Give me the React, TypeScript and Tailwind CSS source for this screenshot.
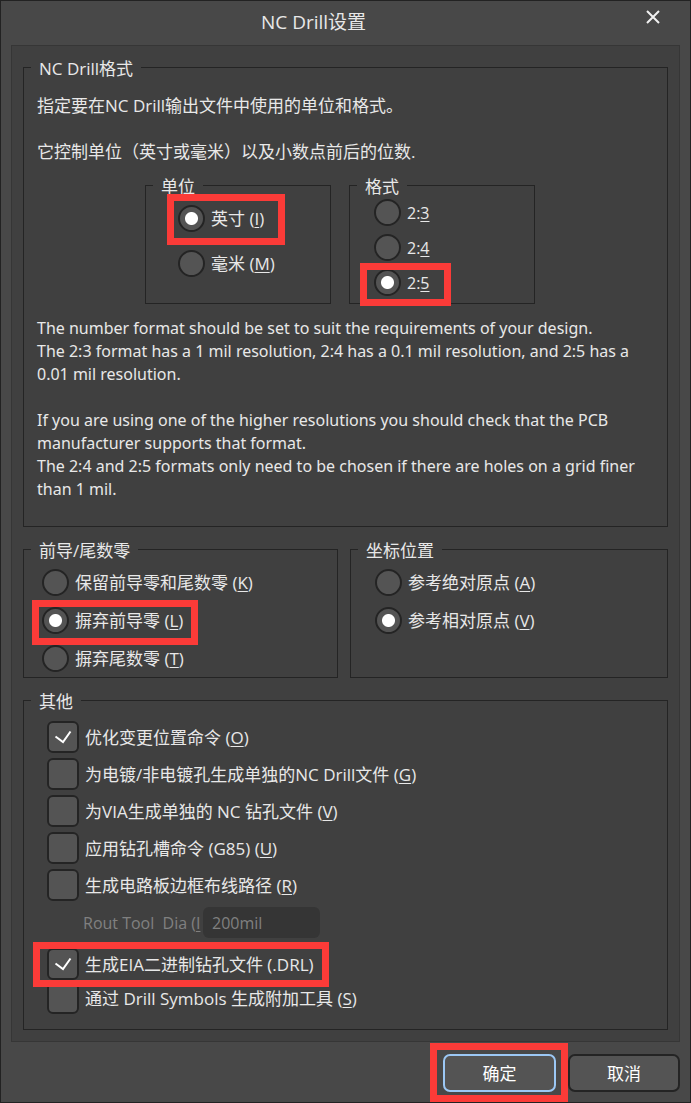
import type { ReactNode } from 'react';

function Group({ title, className, children }: { title: string; className: string; children: ReactNode }) {
  return (
    <fieldset className={`min-w-0 border border-[#242424] ${className}`}>
      <legend className="ml-[7px] px-2 pt-1 leading-6">{title}</legend>
      {children}
    </fieldset>
  );
}

function Mark({ className }: { className: string }) {
  return <span aria-hidden="true" className={`pointer-events-none absolute z-10 border-[7px] border-[#fb3b38] ${className}`} />;
}

function Key({ children }: { children: string }) {
  return (
    <>
      (<span className="underline underline-offset-2">{children}</span>)
    </>
  );
}

function Radio({ name, checked, mark, children }: { name: string; checked?: boolean; mark?: string; children: ReactNode }) {
  return (
    <label className="relative flex h-[27px] w-fit items-center gap-[6px] whitespace-nowrap">
      <input
        type="radio"
        name={name}
        defaultChecked={checked}
        className="size-[27px] shrink-0 appearance-none rounded-full border-2 border-[#242424] bg-[#545454] checked:bg-[radial-gradient(circle,#ffffff_6px,#545454_7px)]"
      />
      <span>{children}</span>
      {mark && <Mark className={mark} />}
    </label>
  );
}

function Check({ checked, mark, children }: { checked?: boolean; mark?: string; children: ReactNode }) {
  return (
    <label className="relative flex h-8 w-fit items-center gap-[6px] whitespace-nowrap">
      <span className="grid size-8 shrink-0 place-items-center">
        <input
          type="checkbox"
          defaultChecked={checked}
          className="peer col-start-1 row-start-1 size-8 appearance-none rounded-[6px] border-2 border-[#242424] bg-[#545454]"
        />
        <svg
          viewBox="0 0 32 32"
          className="pointer-events-none invisible col-start-1 row-start-1 size-8 fill-none stroke-white stroke-2 peer-checked:visible"
        >
          <path d="M8.5 15.5 L16 21 L23.5 10.5" />
        </svg>
      </span>
      <span>{children}</span>
      {mark && <Mark className={mark} />}
    </label>
  );
}

export default function App() {
  return (
    <div className="border border-[#222222] bg-[#484848] font-['Open_Sans','Noto_Sans_CJK_SC',sans-serif] text-[17px] leading-[23px] text-[#e8e8e8]">
      <header className="flex h-11 items-center pr-[22px]">
        <h1 className="flex-1 pr-3 pb-[2px] text-center text-[19px] leading-6">NC Drill设置</h1>
        <button type="button" aria-label="关闭" className="mb-3 grid h-7 w-[30px] place-items-center">
          <svg viewBox="0 0 14 14" className="size-[14px] fill-none stroke-[#f0f0f0] stroke-2">
            <path d="M1 1 L13 13 M13 1 L1 13" />
          </svg>
        </button>
      </header>

      <main className="mx-[10px] flex flex-col gap-2 border border-[#363636] bg-[#404040] px-[11px] pt-[7px] pb-[11px]">
        <Group title="NC Drill格式" className="pb-[25px]">
          <div className="px-[13px] pt-[13px]">
            <p>指定要在NC Drill输出文件中使用的单位和格式。</p>
            <p className="mt-[23px]">它控制单位（英寸或毫米）以及小数点前后的位数.</p>
          </div>
          <div className="mt-2 ml-[121px] flex gap-[18px]">
            <Group title="单位" className="w-[186px]">
              <div className="flex flex-col gap-[18px] pt-[6px] pl-8">
                <Radio name="unit" checked mark="-left-[11px] -top-[11px] h-[51px] w-[118px]">
                  英寸 <Key>I</Key>
                </Radio>
                <Radio name="unit">
                  毫米 <Key>M</Key>
                </Radio>
              </div>
            </Group>
            <Group title="格式" className="w-[186px]">
              <div className="flex flex-col gap-2 pb-[7px] pl-6 text-base">
                <Radio name="format">
                  2:<span className="underline underline-offset-2">3</span>
                </Radio>
                <Radio name="format">
                  2:<span className="underline underline-offset-2">4</span>
                </Radio>
                <Radio name="format" checked mark="-left-[14px] -top-[6px] h-[43px] w-[91px]">
                  2:<span className="underline underline-offset-2">5</span>
                </Radio>
              </div>
            </Group>
          </div>
          <div className="mt-[13px] px-[13px] font-['Noto_Sans',sans-serif] text-base leading-[23px]">
            <p>
              The number format should be set to suit the requirements of your design.
              <br />
              The 2:3 format has a 1 mil resolution, 2:4 has a 0.1 mil resolution, and 2:5 has a
              <br />
              0.01 mil resolution.
            </p>
            <p className="mt-[23px]">
              If you are using one of the higher resolutions you should check that the PCB
              <br />
              manufacturer supports that format.
              <br />
              The 2:4 and 2:5 formats only need to be chosen if there are holes on a grid finer
              <br />
              than 1 mil.
            </p>
          </div>
        </Group>

        <div className="grid grid-cols-[315fr_318fr] gap-3">
          <Group title="前导/尾数零" className="pb-[5px]">
            <div className="flex flex-col gap-[11px] pt-[6px] pl-[18px]">
              <Radio name="zeros">
                保留前导零和尾数零 <Key>K</Key>
              </Radio>
              <Radio name="zeros" checked mark="-left-[10px] -top-[7px] h-[45px] w-[166px]">
                摒弃前导零 <Key>L</Key>
              </Radio>
              <Radio name="zeros">
                摒弃尾数零 <Key>T</Key>
              </Radio>
            </div>
          </Group>
          <Group title="坐标位置" className="pb-[5px]">
            <div className="flex flex-col gap-[11px] pt-[6px] pl-6">
              <Radio name="origin">
                参考绝对原点 <Key>A</Key>
              </Radio>
              <Radio name="origin" checked>
                参考相对原点 <Key>V</Key>
              </Radio>
            </div>
          </Group>
        </div>

        <Group title="其他" className="pb-[15px]">
          <div className="flex flex-col gap-[5px] pt-[7px] pl-[23px]">
            <Check checked>
              优化变更位置命令 <Key>O</Key>
            </Check>
            <Check>
              为电镀/非电镀孔生成单独的NC Drill文件 <Key>G</Key>
            </Check>
            <Check>
              为VIA生成单独的 NC 钻孔文件 <Key>V</Key>
            </Check>
            <Check>
              应用钻孔槽命令 (G85) <Key>U</Key>
            </Check>
            <Check>
              生成电路板边框布线路径 <Key>R</Key>
            </Check>
          </div>
          <div className="mt-[6px] ml-[59px] flex h-[31px] items-center text-base text-[#808080]">
            <label htmlFor="rout-tool" className="w-[120px] shrink-0 overflow-hidden whitespace-nowrap">
              Rout Tool&nbsp; Dia (<span className="underline underline-offset-2">I</span>
            </label>
            <input
              id="rout-tool"
              disabled
              defaultValue="200mil"
              className="h-[31px] w-[117px] rounded-[6px] bg-[#353535] px-[9px]"
            />
          </div>
          <div className="mt-[10px] flex flex-col gap-[2px] pl-[23px]">
            <Check checked mark="-left-[14px] -top-[6px] h-[45px] w-[296px]">
              生成EIA二进制钻孔文件 (.DRL)
            </Check>
            <Check>
              通过 Drill Symbols 生成附加工具 <Key>S</Key>
            </Check>
          </div>
        </Group>
      </main>

      <footer className="flex justify-end gap-3 px-[10px] pt-3 pb-[10px]">
        <div className="relative">
          <button type="button" className="h-[38px] w-[113px] rounded-[7px] border-2 border-[#9cc8f5] bg-[#545454] text-white">
            确定
          </button>
          <Mark className="-top-[11px] -left-[13px] h-[59px] w-[138px]" />
        </div>
        <button type="button" className="h-[38px] w-28 rounded-[7px] border-2 border-[#242424] bg-[#545454] text-white">
          取消
        </button>
      </footer>
    </div>
  );
}
